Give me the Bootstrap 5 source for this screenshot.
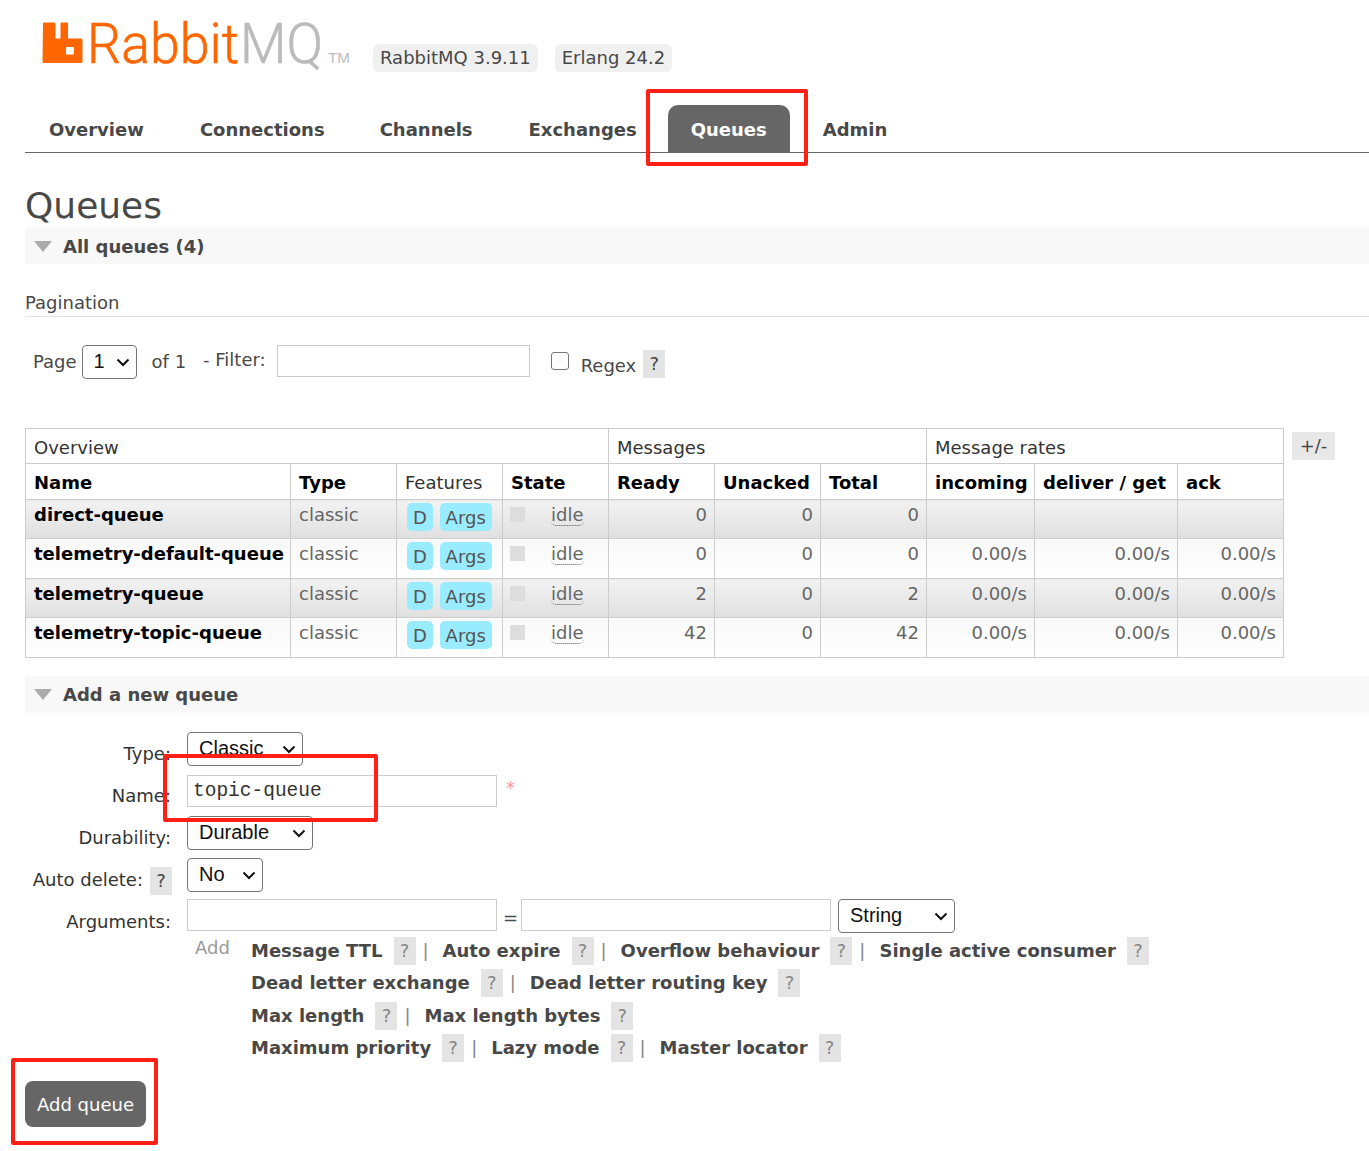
<!DOCTYPE html>
<html lang="en">
<head>
    <meta charset="UTF-8">
    <meta name="viewport" content="width=device-width, initial-scale=1.0">
    <title>RabbitMQ Management</title>
    <link href="https://cdn.jsdelivr.net/npm/bootstrap@5.3.0/dist/css/bootstrap.min.css" rel="stylesheet">
    <style>
        body {
            font-family: "DejaVu Sans", sans-serif;
            font-size: 18px;
            color: #484848;
            background: #fff;
            position: relative;
            height: 1151px;
            overflow: hidden;
        }
        .page-head { height: 90px; padding-left: 43px; padding-top: 17px; }
        .page-head svg { overflow: visible; flex: none; }
        .head-pills { margin-left: 10px; margin-top: 27px; gap: 17px; }
        .head-pill {
            background: #f0f0f0;
            border-radius: 6px;
            padding: 0 7px;
            height: 28px;
            line-height: 28px;
            color: #484848;
        }
        .main-tabs { margin-left: 25px; height: 63px; padding-top: 15px; border-bottom: 1px solid #666; }
        .main-tabs a {
            display: block;
            height: 47px;
            line-height: 50px;
            padding: 0 24px;
            margin-right: 8px;
            font-weight: 700;
            color: #484848;
            text-decoration: none;
            border-radius: 10px 10px 0 0;
        }
        .main-tabs a.tab-tight { margin-right: 7px; }
        .main-tabs a.on { background: #666; color: #fff; padding: 0 23px; margin-right: 9px; }
        .page-body { padding-left: 25px; }
        .page-title { font-size: 36px; font-weight: 400; line-height: 44px; margin: 31px 0 0; height: 43px; color: #484848; }
        .fold-bar {
            background: #f8f8f8;
            height: 37px;
            line-height: 39px;
            font-weight: 700;
            padding-left: 9px;
            color: #484848;
        }
        .add-bar { margin-top: 18px; line-height: 37px; }
        .fold-tri {
            display: inline-block;
            width: 0; height: 0;
            border-left: 9px solid transparent;
            border-right: 9px solid transparent;
            border-top: 11px solid #aaa;
            margin-right: 11px;
            vertical-align: 1px;
        }
        .pager-head { margin-top: 25px; height: 28px; line-height: 28px; border-bottom: 1px solid #e4e4e4; font-size: 18px; }
        .pager-row { height: 111px; padding: 28px 0 0 8px; }
        .pager-page { margin-right: 5px; padding-top: 3px; }
        .pager-of { margin-left: 15px; padding-top: 3px; }
        .pager-filter { margin-left: 17px; margin-right: 11px; padding-top: 1px; }
        .pager-regex { margin-left: 12px; margin-right: 7px; padding-top: 7px; }
        .filter-check {
            appearance: none;
            width: 18px;
            height: 18px;
            margin: 7px 0 0 21px;
            background: #fff;
            border: 1px solid #767676;
            border-radius: 3px;
        }
        .plain-select {
            appearance: none;
            font-family: "Liberation Sans", sans-serif;
            font-size: 20px;
            color: #111;
            border: 1px solid #767676;
            border-radius: 4px;
            height: 34px;
            padding: 0 4px 3px 11px;
            background: #fff url("data:image/svg+xml,%3Csvg xmlns='http://www.w3.org/2000/svg' width='14' height='9' viewBox='0 0 14 9'%3E%3Cpath d='M1.500 1.500 7 7l5.500-5.500' fill='none' stroke='%23111' stroke-width='2'/%3E%3C/svg%3E") no-repeat right 6px center;
        }
        .sel-page { width: 55px; }
        .sel-type { width: 116px; }
        .sel-dur { width: 126px; }
        .sel-del { width: 76px; }
        .sel-arg { width: 117px; margin-left: 7px; }
        .plain-input {
            border: 1px solid #ccc;
            background: #fff;
            height: 32px;
            padding: 0 5px;
            outline: 0;
        }
        .input-filter { width: 253px; }
        .input-wide { width: 310px; }
        .help-q {
            display: inline-block;
            background: #e4e4e4;
            color: #888;
            width: 22px;
            height: 28px;
            line-height: 28px;
            text-align: center;
            font-weight: 400;
        }
        .help-q.dark { color: #484848; }
        .pager-help { margin-top: 5px; }
        .queue-wrap { position: relative; }
        .queue-table { table-layout: fixed; width: 1258px; border-collapse: collapse; }
        .queue-table th, .queue-table td {
            border: 1px solid #ccc;
            padding: 0 8px;
            vertical-align: top;
        }
        .queue-table thead th { background: #fff; color: #000; padding-top: 3px; line-height: 31px; font-weight: 700; white-space: nowrap; }
        .queue-table thead tr + tr th { line-height: 32px; }
        .queue-table thead th.thin { font-weight: 400; color: #333; }
        .queue-table tbody td { padding-top: 2px; line-height: 26px; color: #666; white-space: nowrap; }
        .queue-table tbody td.num { text-align: right; padding-right: 7px; }
        .queue-table tbody td.qname { font-weight: 700; color: #000; }
        .row-a td { background: linear-gradient(#f2f2f2, #e0e0e0); height: 39px; }
        .row-b td { background: linear-gradient(#f8f8f8, #fff); height: 40px; }
        .feat-tag {
            display: inline-block;
            background: #99ebff;
            border-radius: 5px;
            padding: 0 6px;
            height: 28px;
            line-height: 29px;
            margin-top: 1px;
            margin-left: 1px;
            color: #555;
        }
        .feat-tag.first { margin-left: 2px; }
        .state-box { display: inline-block; width: 15px; height: 15px; background: #ddd; vertical-align: -1px; margin: 0 26px 0 -1px; }
        .state-txt { border-bottom: 1px dotted #555; line-height: 20px; display: inline-block; border-radius: 0 0 5px 5px; }
        .plus-minus {
            position: absolute;
            left: 1267px;
            top: 4px;
            background: #e8e8e8;
            width: 43px;
            height: 28px;
            line-height: 28px;
            text-align: center;
            color: #484848;
        }
        .form-grid { display: grid; grid-template-columns: 146px auto; column-gap: 16px; margin-top: 19px; }
        .form-lbl { text-align: right; color: #333; white-space: nowrap; padding-top: 8px; }
        .form-lbl.args-lbl { padding-top: 9px; }
        .form-cell { margin-bottom: 8px; display: flex; align-items: flex-start; }
        .form-cell.name-cell { padding-top: 1px; margin-bottom: 9px; }
        .form-cell.del-cell { margin-bottom: 7px; }
        .del-help { margin-left: 7px; margin-right: -1px; vertical-align: -1px; }
        .eq-sign { margin: 0 6px; padding-top: 5px; width: 12px; }
        .star { color: #ff9aa8; margin-left: 9px; margin-top: -1px; }
        .mono-val { font-family: "Liberation Mono", monospace; font-size: 19.5px; color: #333; }
        .extras { margin-left: 162px; margin-top: -4px; display: flex; }
        .extras-add { color: #999; padding: 0 0 0 8px; width: 64px; line-height: 22px; flex: none; }
        .extras-line { height: 32.3px; line-height: 28px; font-weight: 700; white-space: nowrap; }
        .extras-line .help-q { margin: 0 4px 0 11px; }
        .extras-line .pipe { color: #888; font-weight: 400; margin: 0 14px 0 3px; }
        .add-btn {
            background: #666;
            color: #fff;
            border: 0;
            border-radius: 8px;
            width: 121px;
            height: 46px;
            font-size: 18px;
            padding: 0;
            margin-top: 15px;
        }
        .red-mark { position: absolute; border: 4px solid #fe2015; border-radius: 2px; pointer-events: none; }
        .mark-tab { left: 646px; top: 89px; width: 162px; height: 77px; }
        .mark-name { left: 163px; top: 754px; width: 215px; height: 68px; }
        .mark-btn { left: 11px; top: 1058px; width: 147px; height: 87px; }
    </style>
</head>
<body>
    <div class="page-head d-flex align-items-start">
        <svg width="320" height="60" viewBox="0 0 320 60">
            <path fill="#f60" d="M0 6.500a1 1 0 0 1 1-1h10.500a1 1 0 0 1 1 1v15h5v-15a1 1 0 0 1 1-1h5.500a1 1 0 0 1 1 1v15h13a1.500 1.500 0 0 1 1.500 1.500v21.500a1.500 1.500 0 0 1-1.500 1.500h-37a1.500 1.500 0 0 1-1.500-1.500zM23 30v7.500h8v-7.500z"/>
            <text x="44" y="46" font-family="Roboto, sans-serif" font-weight="300" font-size="56" fill="#f60" stroke="#f60" stroke-width=".6" textLength="152" lengthAdjust="spacingAndGlyphs">Rabbit</text>
            <text x="197" y="46" font-family="Roboto, sans-serif" font-weight="300" font-size="56" fill="#bbb" stroke="#bbb" stroke-width=".6" textLength="83" lengthAdjust="spacingAndGlyphs">MQ</text>
            <text x="285" y="46" font-family="Liberation Sans, sans-serif" font-size="14" fill="#bbb" textLength="22" lengthAdjust="spacingAndGlyphs">TM</text>
        </svg>
        <div class="d-flex head-pills">
            <span class="head-pill">RabbitMQ 3.9.11</span>
            <span class="head-pill">Erlang 24.2</span>
        </div>
    </div>
    <div class="main-tabs d-flex">
        <a href="#">Overview</a>
        <a href="#" class="tab-tight">Connections</a>
        <a href="#">Channels</a>
        <a href="#" class="tab-tight">Exchanges</a>
        <a href="#" class="on">Queues</a>
        <a href="#">Admin</a>
    </div>
    <div class="page-body">
        <h1 class="page-title">Queues</h1>
        <div class="fold-bar"><span class="fold-tri"></span>All queues (4)</div>
        <div class="pager-head">Pagination</div>
        <div class="pager-row d-flex align-items-start">
            <span class="pager-page">Page</span>
            <select class="plain-select sel-page"><option>1</option></select>
            <span class="pager-of">of 1</span>
            <span class="pager-filter">- Filter:</span>
            <input class="plain-input input-filter" type="text">
            <input class="filter-check" type="checkbox">
            <span class="pager-regex">Regex</span>
            <span class="help-q dark pager-help">?</span>
        </div>
        <div class="queue-wrap">
            <table class="queue-table">
                <colgroup>
                    <col style="width:265px"><col style="width:106px"><col style="width:106px"><col style="width:106px">
                    <col style="width:106px"><col style="width:106px"><col style="width:106px">
                    <col style="width:108px"><col style="width:143px"><col style="width:106px">
                </colgroup>
                <thead>
                    <tr>
                        <th colspan="4" class="thin">Overview</th>
                        <th colspan="3" class="thin">Messages</th>
                        <th colspan="3" class="thin">Message rates</th>
                    </tr>
                    <tr>
                        <th>Name</th><th>Type</th><th class="thin">Features</th><th>State</th>
                        <th>Ready</th><th>Unacked</th><th>Total</th>
                        <th>incoming</th><th>deliver / get</th><th>ack</th>
                    </tr>
                </thead>
                <tbody id="queue-rows"></tbody>
            </table>
            <div class="plus-minus">+/-</div>
        </div>
        <div class="fold-bar add-bar"><span class="fold-tri"></span>Add a new queue</div>
        <div class="form-grid">
            <div class="form-lbl">Type:</div>
            <div class="form-cell"><select class="plain-select sel-type"><option>Classic</option></select></div>
            <div class="form-lbl">Name:</div>
            <div class="form-cell name-cell">
                <input class="plain-input mono-val input-wide" type="text" value="topic-queue">
                <span class="star">*</span>
            </div>
            <div class="form-lbl">Durability:</div>
            <div class="form-cell"><select class="plain-select sel-dur"><option>Durable</option></select></div>
            <div class="form-lbl">Auto delete:<span class="help-q dark del-help">?</span></div>
            <div class="form-cell del-cell"><select class="plain-select sel-del"><option>No</option></select></div>
            <div class="form-lbl args-lbl">Arguments:</div>
            <div class="form-cell">
                <input class="plain-input input-wide" type="text">
                <span class="eq-sign">=</span>
                <input class="plain-input input-wide" type="text">
                <select class="plain-select sel-arg"><option>String</option></select>
            </div>
        </div>
        <div class="extras">
            <div class="extras-add">Add</div>
            <div id="extras-list"></div>
        </div>
        <button class="add-btn" type="button">Add queue</button>
    </div>
    <div class="red-mark mark-tab"></div>
    <div class="red-mark mark-name"></div>
    <div class="red-mark mark-btn"></div>

    <script>
        const queues = [
            ['direct-queue', 0, 0, 0, false],
            ['telemetry-default-queue', 0, 0, 0, true],
            ['telemetry-queue', 2, 0, 2, true],
            ['telemetry-topic-queue', 42, 0, 42, true]
        ];
        document.getElementById('queue-rows').innerHTML = queues.map((q, i) => {
            const rate = q[4] ? '0.00/s' : '';
            return `<tr class="${i % 2 ? 'row-b' : 'row-a'}">
                <td class="qname">${q[0]}</td><td>classic</td>
                <td><span class="feat-tag first">D</span> <span class="feat-tag">Args</span></td>
                <td><span class="state-box"></span><span class="state-txt">idle</span></td>
                <td class="num">${q[1]}</td><td class="num">${q[2]}</td><td class="num">${q[3]}</td>
                <td class="num">${rate}</td><td class="num">${rate}</td><td class="num">${rate}</td>
            </tr>`;
        }).join('');

        const extras = [
            ['Message TTL', 'Auto expire', 'Overflow behaviour', 'Single active consumer'],
            ['Dead letter exchange', 'Dead letter routing key'],
            ['Max length', 'Max length bytes'],
            ['Maximum priority', 'Lazy mode', 'Master locator']
        ];
        document.getElementById('extras-list').innerHTML = extras.map(line =>
            '<div class="extras-line">' +
            line.map(t => `${t}<span class="help-q">?</span>`).join('<span class="pipe">|</span>') +
            '</div>').join('');
    </script>
    <script src="https://cdn.jsdelivr.net/npm/bootstrap@5.3.0/dist/js/bootstrap.bundle.min.js"></script>
</body>
</html>
